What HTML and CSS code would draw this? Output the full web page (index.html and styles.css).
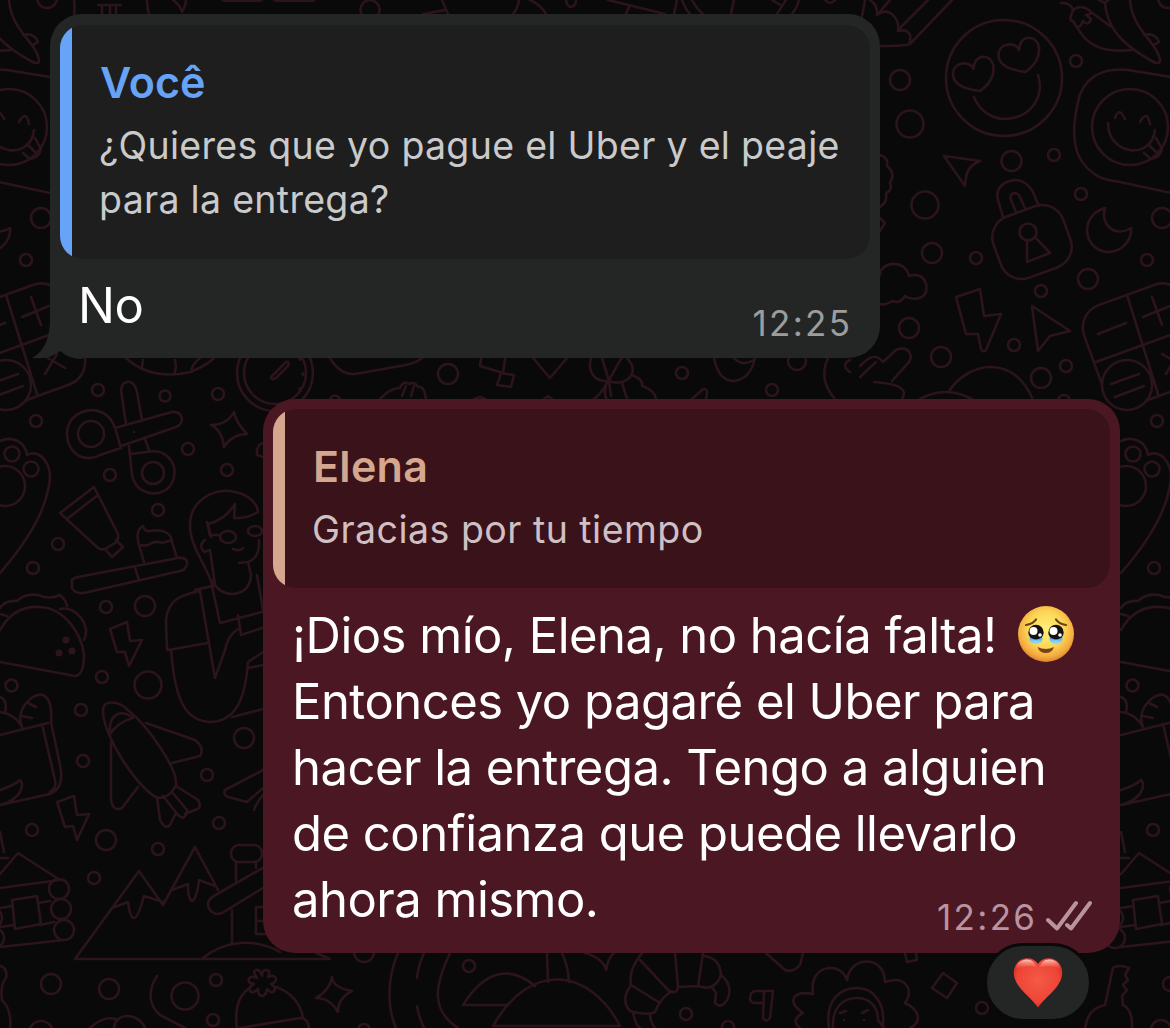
FILE: index.html
```html
<!DOCTYPE html>
<html lang="es">
<head>
<meta charset="utf-8">
<title>Chat</title>
<link rel="stylesheet" href="styles.css">
</head>
<body>
<svg class="wallpaper" viewBox="0 0 1170 1028" aria-hidden="true">
  <defs>
    <g id="tile-right">
      <circle cx="1076" cy="61" r="6"/><circle cx="900" cy="80" r="10"/><circle cx="910" cy="124" r="13.5"/><circle cx="1011.500" cy="161" r="10"/><circle cx="1054" cy="155" r="6"/><circle cx="925" cy="205" r="13.500"/><circle cx="1081" cy="194" r="6"/><circle cx="932" cy="253" r="10"/><circle cx="976" cy="258" r="6"/><circle cx="1041" cy="291" r="6"/><circle cx="1088" cy="279" r="10"/><circle cx="1147" cy="260" r="6"/><circle cx="1162" cy="218" r="10"/><circle cx="909" cy="328" r="10"/><circle cx="1014" cy="345" r="6"/><circle cx="941" cy="357" r="10"/><circle cx="1041" cy="378" r="10"/><circle cx="1066" cy="366" r="6"/><circle cx="1064" cy="401" r="6"/><circle cx="1168" cy="-2" r="10"/>
      <circle cx="1004" cy="78" r="58"/>
      <path d="M973.500 69C970 60 953 62 953 74C953 85 965 89 980 91C990 84 994 75 993.500 67C992 53 974 53 973.500 69Z"/>
      <path d="M1019 50C1015.500 41 998.500 43 998.500 55C998.500 66 1010.500 70 1025.500 72C1035.500 65 1039.500 56 1039 48C1037.500 34 1019.500 34 1019 50Z"/>
      <path d="M974 97C980 112 993 119 1005 119C1030 118 1045 98 1038 75"/>
      <path d="M928 0L898 30M952 0L910 44Q907 46 880 46M877 15C890 5 900 20 898 31C910 28 912 36 909 44M862 17L865 0M870 0Q878 5 877 15L890 0"/>
      <path d="M1061 3Q1070 2 1073 10Q1068 22 1073 21Q1078 33 1083 21Q1088 27 1091 19L1086 15Q1094 14 1089 10Q1080 4 1073 10M1073 21L1080 32C1092 50 1110 52 1132 50M1091 12L1110 26M1099 0L1105 3L1108 0M1105 3C1107 28 1122 44 1150 60Q1160 66 1160 60C1158 43 1132 30 1130 0M1144 35Q1155 32 1159 42L1154 45"/>
      <path d="M944 156L980 161C968 166 966 172 965 186Z"/>
      <path d="M1171 77L1128 70C1100 67 1082 80 1078 102C1072 128 1073 150 1083 163C1095 178 1105 180 1120 182L1171 193"/>
      <circle cx="1130" cy="127" r="38"/>
      <path d="M1108 123C1108 156 1152 160 1155 130M1115 118Q1119 106 1125 119M1140 122Q1147 109 1150 124M1144 153L1151 159Q1160 158 1162 149L1156 138M1149 145L1157 153"/>
      <path d="M880 155Q889 158 887 166Q896 173 890 183Q893 190 886 193Q888 202 880 207M880 218L885 223L880 231"/>
      <path d="M1003 217L998 200C995 190 1002 181 1015 180C1026 180 1033 190 1035 197L1039 206M1016 212L1011 200C1008 192 1018 191 1020 197L1025 208"/>
      <rect x="995" y="209.500" width="74" height="65" rx="22" transform="rotate(-20 1032 242)"/>
      <circle cx="1028" cy="232" r="8.500"/><path d="M1027 240L1027 262L1050 253L1035 237"/>
      <path d="M1105 208C1080 215 1082 248 1106 252C1122 253 1132 240 1131 228C1115 238 1100 225 1105 208Z"/>
      <path d="M880 275C880 262 905 258 909 276C925 270 932 290 922 297Q912 301 905 296C900 304 895 302 892 301Q885 306 880 304"/>
      <path d="M956 297L980 289L984 316L1001 314L986 350Q983 353 981 349L978 334L966 334Z"/>
      <path d="M1032 306L1070 331L1050 336L1038 351Z"/>
      <rect x="1091" y="292" width="107" height="106" rx="24" transform="rotate(-20 1144 345)"/>
      <path d="M1127 295L1158 394M1096 362L1192 327M1098 334L1126 323M1143 317L1170 306M1152 297L1162 325M1162 354L1186 368M1166 374L1178 354"/>
      <circle class="solid" cx="1127" cy="385" r="25"/><path d="M1111 384L1139 374M1115 397L1144 386"/>
      <path d="M860 377L876 362M860 366C868 358 875 352 883 362L896 350C906 345 914 353 909 362L892 381M874 382C905 384 907 392 902 399"/>
      <path d="M949 391C970 360 1015 355 1033 400M920 399Q945 385 972 399"/>
    </g>
    <g id="tile-left">
      <circle cx="36" cy="421" r="6"/><circle cx="33" cy="568" r="6"/><circle cx="11.500" cy="685.500" r="6"/><circle cx="32" cy="830" r="6"/>
      <circle cx="12" cy="454" r="7.500"/><circle cx="31" cy="469" r="7.500"/><circle cx="5" cy="486" r="20"/>
      <path d="M0 441C10 436 25 440 27 455C40 448 55 465 48 490C42 520 20 550 0 573"/>
      <path d="M0 630C10 612 25 606 40 607C65 608 82 635 84 655Q84 675 75 676L0 662M60 609C75 605 92 625 84 640M0 608Q5 600 17 601Q25 593 38 595Q50 600 60 595Q66 600 67 606M0 614L7 616"/>
      <g class="dots"><circle cx="66" cy="640" r="3.500"/><circle cx="59" cy="653" r="3.500"/><circle cx="72" cy="651" r="3.500"/></g>
      <path d="M0 735L48 723M22 727C15 710 32 692 43 695Q53 700 51 722L60 765Q65 788 50 794L0 805M42 724L55 780Q57 788 50 792M0 697Q8 700 5 712M0 712Q15 714 22 727M28 703L36 707M22 716L32 718M0 790Q15 785 20 780Q25 785 18 795Q10 803 0 805"/>
      <path d="M0 874L18 853L60 880L0 888M0 858H8M12 900L37 896L41 924L15 929ZM0 908L12 906M38 903L50 901M0 927L14 925M40 925L54 922M0 947L64 940M0 832L4 852"/>
      <circle cx="59" cy="889" r="10"/><circle cx="61" cy="909" r="10"/><circle cx="64" cy="930" r="10"/><circle cx="-8" cy="918" r="10"/><circle cx="-6" cy="938" r="10"/>
    </g>
  </defs>
  <use href="#tile-right"/>
  <use href="#tile-right" x="-1121"/>
  <use href="#tile-left"/>
  <use href="#tile-left" x="1121"/>

  <!-- strip above the first bubble -->
  <path d="M74 0Q75 10 74 14M98 5H121M102 7V14M110 7V14M116 7V14M147 0Q147 8 149 14M173 0Q180 5 182 12Q186 5 186 0M423 14L445 10M442 0L448 14M519 0Q518 8 513 14M530 0Q541 5 546 14M566 0Q567 7 571 7Q576 6 576 0M608 0L665 14M629 7L626 14M677 0L674 14M682 0Q686 10 690 14M692 0Q697 9 703 14M734 0L731 14M772 0L782 6L786 0M782 6L777 14M799 0Q797 8 792 14M825 0Q830 6 835 0"/>
  <ellipse cx="370" cy="10" rx="9.500" ry="10"/>
  <g class="dots"><rect x="221" y="-6" width="42" height="8" rx="3"/><rect x="273" y="-6" width="43" height="8" rx="3"/></g>
  <!-- strip between the bubbles -->
  <circle cx="275" cy="373" r="38"/><circle cx="275" cy="373" r="31"/>
  <path d="M271 377L286 362Q290 361 288 366L276 378Q271 381 271 377"/>
  <g class="dots"><circle cx="300" cy="359" r="2"/><circle cx="303" cy="374" r="2"/><circle cx="300" cy="389" r="2"/></g>
  <path d="M126 358C150 380 190 380 214 358M143 360L142 367M175 360Q177 368 174 374M200 358Q190 366 192 372"/>
  <path d="M330 358Q340 375 355 374L400 366Q415 364 422 358M481 359L480 366L503 373L505 359M501 373L514 375L511 387L497 385ZM533 358L550 378L567 358"/>
  <circle cx="448" cy="374" r="10"/><circle cx="682" cy="373" r="6"/><circle cx="772" cy="390" r="6"/><circle cx="797" cy="361" r="9"/>
  <path d="M591 358C587 372 595 382 608 381C613 375 618 362 622 358M602 358L609 381C622 386 636 378 632 365L627 358M607 382Q603 392 594 399M607 382Q603 396 607 399M609 382L611 396M622 383L627 399M632 375Q644 380 642 386Q655 390 656 399"/>
  <path d="M714 358Q718 380 733 381Q750 380 755 358M734 358Q742 367 754 360M692 399L702 390Q709 386 706 399M828 358Q818 380 835 399M850 360Q840 365 850 372M380 399Q390 388 400 388Q403 380 409 384Q415 381 418 387Q424 385 426 399M402 396L406 386M411 396L414 386M330 399Q335 392 340 399M474 399L480 397L485 399M544 399L548 396L552 399"/>
  <!-- scissors, toothpaste, brush -->
  <circle cx="98" cy="390" r="6"/><circle cx="165" cy="396" r="5.500"/><circle cx="218" cy="394" r="6"/><circle cx="188" cy="449" r="6"/><circle cx="227" cy="470" r="6"/><circle cx="110" cy="475" r="6"/><circle cx="158" cy="510" r="6"/><circle cx="58" cy="544" r="6"/>
  <circle cx="91" cy="434" r="13"/><circle cx="153" cy="473" r="11"/>
  <path d="M115 428C108 408 90 408 80 413C60 422 65 452 82 457Q92 460 100 455L121 448ZM115 428L172 412Q181 411 182 420Q181 425 176 427L121 446M126 424L121 390Q122 381 130 382Q135 383 137 392L142 420M129 446L132 475C135 490 148 495 158 493C175 490 180 468 168 457Q160 449 147 452L130 454M145 439L149 450M134 432V432"/>
  <path d="M234 412Q235 421 247 434Q232 434 224 447Q222 430 211 425Q227 425 234 412ZM263 443Q256 445 257 455L263 457"/>
  <path d="M94 487L60 513L98 548Q101 550 105 549L115 543Q119 540 118 534ZM98 495L67 519M105 549L112 557L123 547L116 540"/>
  <path d="M72 582Q70 579 78 577L178 558Q188 557 187 564Q186 570 180 571L84 593Q75 594 72 588ZM135 568L139 580M144 562L139 545Q135 530 143 526Q144 532 150 531C165 528 172 535 172 542L177 558M139 545Q143 546 148 545Q155 540 162 543L172 540"/>
  <!-- woman -->
  <path d="M213 587C207 565 190 548 190 525C190 500 215 487 235 492C250 495 258 505 258 512Q246 519 234 518L235 504Q225 520 208 524L211 537M207 522L210 536M210 535H220M205 540Q198 545 204 552L210 550L215 585M239 563L248 562Q260 558 259 540M248 562L251 575Q250 593 232 594Q217 593 213 580M233 549Q240 552 243 548M195 590L212 586L220 623L262 612M257 575L263 610"/>
  <ellipse cx="228" cy="537" rx="8" ry="6"/><ellipse cx="255" cy="531" rx="7" ry="5"/>
  <path d="M167 650L166 620C168 600 180 595 200 591L215 678L225 650Q228 635 238 629M168 650L208 643M171 650C175 700 185 722 212 722C240 720 246 690 248 662L263 652M238 615L241 635L262 628M248 668L263 665M232 717L263 709"/>
  <!-- bolts, rocket, plane -->
  <path d="M110 629L127 622L130 641L142 640L129 666L125 652L117 652ZM57 802L74 796L77 815L89 814L77 840L73 826L65 827Z"/>
  <circle cx="106" cy="607" r="6"/><circle cx="145" cy="606" r="10"/><circle cx="102" cy="677" r="6"/><circle cx="148" cy="685" r="13.500"/><circle cx="81" cy="710" r="6"/><circle cx="83" cy="761" r="6"/><circle cx="244" cy="738" r="10"/><circle cx="207" cy="775" r="6"/>
  <path d="M103 710C103 700 118 700 128 710C150 728 178 770 176 785Q170 798 158 798C140 792 102 735 103 710M110 734C108 715 120 708 133 718Q118 722 110 734M146 723L195 740Q205 748 200 756L172 763M111 742V800Q113 812 122 808L138 787M176 786L198 800Q203 808 195 810L185 814M157 797L160 820Q165 830 170 825L176 813M163 796L178 815Q185 822 187 810L172 792M263 770L225 790Q223 795 228 797L247 802L263 788M263 795Q255 805 254 810"/>
  <!-- mountains -->
  <circle cx="106" cy="840" r="10"/><circle cx="158" cy="849" r="6"/><circle cx="219" cy="823" r="6"/><circle cx="94" cy="878" r="6"/>
  <path d="M75 959L139 871L163 905L195 847L218 890M75 959H330L310 950M112 908L128 902Q130 918 134 918Q138 918 144 896L163 902M172 890L188 884Q188 900 192 901Q197 898 199 880L215 886M236 862V882M256 862V868M268 865L212 897Q205 903 210 910Q215 916 222 913L263 888M232 910V943M203 958C225 940 255 938 280 952M270 907H256V934H270M256 921H270"/>
  <rect x="231" y="845" width="31" height="17" rx="8"/>
  <!-- bottom strip -->
  <circle cx="51" cy="984" r="10"/><circle cx="109" cy="989" r="10"/><circle cx="185" cy="996" r="13.500"/><circle cx="216" cy="980" r="6"/><circle cx="213" cy="1020" r="6"/><circle cx="41" cy="1033" r="12"/><circle cx="364" cy="952" r="10"/><circle cx="469" cy="966" r="6"/><circle cx="364" cy="1030" r="6"/><circle cx="686" cy="1014" r="6"/><circle cx="728" cy="1027" r="6"/><circle cx="982" cy="1008" r="6"/><circle cx="1170" cy="984" r="7"/><circle cx="1161" cy="1030" r="10"/>
  <path d="M0 966Q8 968 6 978Q0 985 2 1000Q12 1010 10 1028M157 976C148 990 148 1005 160 1015L185 1028M90 1028Q105 1014 118 1020M114 1028C116 1010 140 1014 145 1028M237 1028C233 1000 245 985 262 985C285 985 300 1000 303 1018M240 1028L300 1018Q308 1018 309 1028M332 977Q333 988 352 991Q338 998 338 1012Q330 998 316 998Q330 990 332 977Z"/>
  <path class="solid" d="M262 976Q262 969 267 970Q271 971 268 977Q275 974 276 979Q276 983 271 984Q277 988 274 991Q271 994 267 989Q266 996 262 996Q258 996 258 989Q253 994 250 991Q248 987 254 984Q247 983 249 979Q250 975 257 978Q252 971 256 970Q260 969 262 976Z"/>
  <path d="M398 953C386 980 388 1010 396 1028M424 953Q418 966 417 978M417 1006Q418 1015 424 1028M450 953C435 985 430 1010 458 1028M508 1005H463C485 970 510 965 535 986M493 1026H620C590 968 530 960 493 1026M547 953L548 982M562 953Q568 965 569 982M585 953Q603 958 606 970Q608 958 614 953"/>
  <path d="M642 953Q628 970 631 985Q620 1000 630 1011Q648 1016 655 1012Q660 998 672 991M640 960L670 992Q678 994 678 986L675 953M631 985L660 1003M678 987L698 986L703 953M704 956Q720 958 721 975Q715 992 698 986M721 975Q733 985 728 998Q722 1010 715 1003L716 993L712 987M633 1012Q635 1024 640 1028M650 1013Q650 1022 655 1028"/>
  <path d="M766 953L785 970Q793 973 800 965L803 953M905 953L907 962L917 960L916 953M800 1028Q790 1020 803 1013C785 1000 795 990 813 994C808 965 840 960 847 980C850 955 885 955 885 982C905 975 915 990 905 1003C920 1010 922 1022 910 1028M829 1028C825 1000 840 988 857 988C875 988 885 1005 883 1024M833 1028C832 1005 845 998 857 998C868 998 878 1005 878 1020L884 1028M840 1013L846 1011M862 1013L868 1010M844 1020V1020M864 1020V1020M763 1003H755Q750 1003 750 998Q750 991 757 991L773 991L770 1018Q766 1023 763 1018L764 992M943 973L957 983L947 998L932 988Z"/>
  <path d="M1105 1005L1113 968Q1118 964 1129 968L1125 975L1128 980L1123 985L1127 990L1122 996L1123 1005Q1133 1010 1132 1028M1105 1005Q1088 1008 1085 1028"/>
</svg>

<main class="chat">
  <article class="bubble incoming">
    <svg class="tail" viewBox="0 0 50 60" aria-hidden="true"><path d="M18 0H50V59Q37 59 28 51Q18 60 0 58Q17 49 18 22Z"/></svg>
    <blockquote class="quote">
      <strong class="author">Você</strong>
      <p class="excerpt">¿Quieres que yo pague el Uber y el peaje<br>para la entrega?</p>
    </blockquote>
    <div class="reply">
      <p class="text">No</p>
      <time class="time">12:25</time>
    </div>
  </article>

  <article class="bubble outgoing">
    <blockquote class="quote">
      <strong class="author">Elena</strong>
      <p class="excerpt">Gracias por tu tiempo</p>
    </blockquote>
    <div class="reply">
      <p class="text">¡Dios mío, Elena, no hacía falta!<svg class="emoji" viewBox="0 0 56 56" role="img" aria-label="emoji">
        <defs>
          <radialGradient id="face" cx=".5" cy=".42" r=".58"><stop offset="0" stop-color="#fff07a"/><stop offset=".55" stop-color="#fcd757"/><stop offset=".85" stop-color="#f3ab3d"/><stop offset="1" stop-color="#dc812f"/></radialGradient>
          <linearGradient id="tear" x1="0" y1="0" x2="0" y2="1"><stop offset="0" stop-color="#2f9be8"/><stop offset="1" stop-color="#9cdcf5"/></linearGradient>
        </defs>
        <circle cx="28" cy="28" r="28" fill="url(#face)"/>
        <path d="M8 19Q15 18 18 13.500M38 13.500Q41 18 48 19" fill="none" stroke="#6a4112" stroke-width="2.200" stroke-linecap="round"/>
        <ellipse cx="18" cy="33" rx="6.500" ry="5" fill="url(#tear)"/><ellipse cx="38" cy="33" rx="6.500" ry="5" fill="url(#tear)"/>
        <circle cx="18" cy="26.500" r="7.700" fill="#171312"/><circle cx="38" cy="26.500" r="7.700" fill="#171312"/>
        <circle cx="15.500" cy="25" r="4" fill="#fff"/><circle cx="35.500" cy="25" r="4" fill="#fff"/>
        <circle cx="22" cy="29" r="1.800" fill="#fff"/><circle cx="42" cy="29" r="1.800" fill="#fff"/>
        <path d="M12.500 31.500Q18 35.500 23.500 31.500V34Q18 38.500 12.500 34ZM32.500 31.500Q38 35.500 43.500 31.500V34Q38 38.500 32.500 34Z" fill="url(#tear)"/>
        <path d="M19.500 41Q28 45 36 41Q34 47 28 47Q21.500 47 19.500 41Z" fill="#7b4315"/>
      </svg><br>
      Entonces yo pagaré el Uber para<br>
      hacer la entrega. Tengo a alguien<br>
      de confianza que puede llevarlo<br>
      ahora mismo.</p>
      <div class="meta">
        <time class="time">12:26</time>
        <svg class="checks" viewBox="0 0 46 32" aria-label="Entregado"><path d="M2 20L11 28.500L30 3M21 25L25 28.500L44 3"/></svg>
      </div>
    </div>
    <div class="reaction">
      <svg viewBox="0 0 50 50" role="img" aria-label="Me encanta">
        <defs>
          <radialGradient id="heart" cx=".5" cy=".45" r=".62"><stop offset="0" stop-color="#f45a46"/><stop offset=".7" stop-color="#ee4436"/><stop offset="1" stop-color="#c9251f"/></radialGradient>
          <linearGradient id="shine" x1="0" y1="0" x2="0" y2="1"><stop offset="0" stop-color="#ffd2c8" stop-opacity=".95"/><stop offset="1" stop-color="#f5604e" stop-opacity="0"/></linearGradient>
        </defs>
        <path d="M25 6C21-1 10-1.500 4.500 4.500C-1 11 0 20 5 27C10.500 35 19 41 25 49.500C31 41 39.500 35 45 27C50 20 51 11 45.500 4.500C40-1.500 29-1 25 6Z" fill="url(#heart)"/>
        <path d="M2.500 12C3 4 9 1.500 14 1.500C19 1.500 22 5 23.500 9C18 8 7 7 2.500 12ZM47.500 12C47 4 41 1.500 36 1.500C31 1.500 28 5 26.500 9C32 8 43 7 47.500 12Z" fill="url(#shine)"/>
      </svg>
    </div>
  </article>
</main>
</body>
</html>
```
FILE: styles.css
```css
* { box-sizing: border-box; }

body {
  position: relative;
  margin: 0;
  width: 1170px;
  height: 1028px;
  overflow: hidden;
  background: #090909;
  font-family: Inter, "Liberation Sans", sans-serif;
}

.wallpaper {
  position: absolute;
  inset: 0;
  width: 1170px;
  height: 1028px;
  fill: none;
  stroke: #2c141d;
  stroke-width: 2.6;
  stroke-linecap: round;
  stroke-linejoin: round;
}
.wallpaper .solid { fill: #090909; }
.wallpaper .dots { fill: #2c141d; stroke: none; }

.chat {
  position: relative;
  display: flex;
  flex-direction: column;
  gap: 41px;
  padding: 14px 50px 0;
}

.bubble {
  position: relative;
  display: flex;
  flex-direction: column;
  padding: 10px;
  border-radius: 32px;
}
.incoming {
  align-self: flex-start;
  width: 830px;
  height: 344px;
  padding-top: 11px;
  background: #242626;
}
.outgoing {
  align-self: flex-end;
  width: 857px;
  height: 554px;
  background: #4b1722;
}

.tail {
  position: absolute;
  left: -18px;
  bottom: -2px;
  width: 50px;
  height: 60px;
  fill: #242626;
}

.quote {
  position: relative;
  margin: 0;
  border-radius: 23px;
  padding: 31px 0 0 40px;
}
.incoming .quote {
  height: 234px;
  background: linear-gradient(90deg, #67a3f6 12px, #1e1e1e 12px);
}
.outgoing .quote {
  height: 179px;
  background: linear-gradient(90deg, #d5a78e 12px, #3a121a 12px);
}

.author {
  display: block;
  font-size: 43px;
  line-height: 52px;
  font-weight: 600;
}
.incoming .author { color: #67a3f6; }
.outgoing .author { color: #d5a78e; letter-spacing: 0.3px; }

.excerpt {
  margin: 11px 0 0 -1px;
  font-size: 37.5px;
  line-height: 54px;
  letter-spacing: 0.3px;
  white-space: nowrap;
}
.incoming .excerpt { color: #cacaca; }
.outgoing .excerpt { color: #d0c0c4; letter-spacing: 0.48px; }

.reply {
  position: relative;
  flex: 1;
  display: flex;
  justify-content: space-between;
  align-items: flex-end;
  padding: 0 20px 0 19px;
}
.text {
  margin: 0;
  align-self: flex-start;
  color: #fff;
  font-size: 49px;
  line-height: 66px;
  letter-spacing: -0.52px;
  white-space: nowrap;
}
.incoming .text { padding-top: 14px; margin-left: -1px; }
.outgoing .text { padding-top: 15px; }

.time {
  font-size: 35px;
  line-height: 42px;
  letter-spacing: 2.3px;
  margin-right: -2.3px;
}
.incoming .time { color: #9c9e9e; margin-bottom: 4px; }

.meta {
  position: absolute;
  right: 18px;
  bottom: 5px;
  display: flex;
  align-items: center;
  gap: 11px;
  color: #b994a0;
}
.checks {
  width: 46px;
  height: 32px;
  margin-top: -2px;
  fill: none;
  stroke: #b994a0;
  stroke-width: 4;
  stroke-linecap: round;
  stroke-linejoin: round;
}

.emoji {
  width: 56px;
  height: 56px;
  margin-left: 21px;
  vertical-align: -9px;
}

.reaction {
  position: absolute;
  right: 28px;
  bottom: -69px;
  width: 108px;
  height: 79px;
  display: flex;
  align-items: center;
  justify-content: center;
  border: 3px solid #090909;
  border-radius: 40px;
  background: #242626;
}
.reaction svg { width: 50px; height: 50px; }
```
